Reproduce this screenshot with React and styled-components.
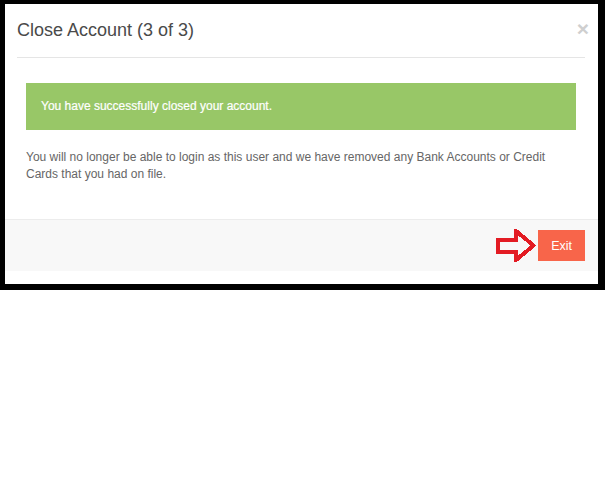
import React from 'react';
import styled, { createGlobalStyle } from 'styled-components';

const GlobalStyle = createGlobalStyle`
  html, body {
    margin: 0;
    padding: 0;
    background: #fff;
  }
  body {
    font-family: "Liberation Sans", Arial, sans-serif;
  }
  * {
    box-sizing: border-box;
  }
`;

const Frame = styled.div`
  width: 605px;
  border-style: solid;
  border-color: #000;
  border-width: 4px 7px 6px 5px;
  background: #fff;
`;

const Modal = styled.div`
  display: flex;
  flex-direction: column;
  padding-bottom: 13px;
`;

const Header = styled.div`
  display: flex;
  align-items: flex-start;
  justify-content: space-between;
  margin: 0 13px 0 12px;
  padding: 13px 0 14px;
  border-bottom: 1px solid #e5e5e5;
`;

const Title = styled.h4`
  margin: 0;
  font-size: 18px;
  font-weight: normal;
  line-height: 26px;
  color: #4a4a4a;
`;

const CloseButton = styled.button`
  margin: 1px -4px 0 0;
  padding: 0;
  border: 0;
  background: none;
  font-family: "Liberation Sans", Arial, sans-serif;
  font-size: 21px;
  font-weight: bold;
  line-height: 21px;
  color: #cfcfcf;
  cursor: pointer;
`;

const Body = styled.div`
  padding: 25px 22px 36px 21px;
`;

const Alert = styled.div`
  padding: 15px;
  margin-bottom: 19px;
  background: #98c767;
  color: #fff;
  font-size: 12px;
  line-height: 17px;
  -webkit-text-stroke: 0.2px #fff;
`;

const Message = styled.p`
  margin: 0;
  font-size: 12px;
  line-height: 17px;
  color: #666;
`;

const Footer = styled.div`
  display: flex;
  align-items: center;
  justify-content: flex-end;
  gap: 2px;
  padding: 10px 13px 10px 0;
  border-top: 1px solid #ececec;
  background: #f8f8f8;
`;

const ExitButton = styled.button`
  height: 31px;
  padding: 0 13px;
  border: 0;
  background: #f8654a;
  color: #fff;
  font-family: "Liberation Sans", Arial, sans-serif;
  font-size: 12.5px;
  cursor: pointer;
`;

const ArrowSvg = styled.svg`
  display: block;
  margin: -1px 0;
`;

function PointerArrow() {
  return (
    <ArrowSvg width="40" height="33" viewBox="0 0 40 33" shapeRendering="crispEdges">
      <path
        d="M2 10.5 H20 V2 L37.5 16.5 L20 31 V22.5 H2 Z"
        fill="none"
        stroke="#e31b23"
        strokeWidth="4"
        strokeLinejoin="miter"
      />
    </ArrowSvg>
  );
}

export default function App() {
  return (
    <>
      <GlobalStyle />
      <Frame>
        <Modal>
          <Header>
            <Title>Close Account (3 of 3)</Title>
            <CloseButton aria-label="Close">×</CloseButton>
          </Header>
          <Body>
            <Alert>You have successfully closed your account.</Alert>
            <Message>
              You will no longer be able to login as this user and we have removed any Bank
              Accounts or Credit Cards that you had on file.
            </Message>
          </Body>
          <Footer>
            <PointerArrow />
            <ExitButton>Exit</ExitButton>
          </Footer>
        </Modal>
      </Frame>
    </>
  );
}
